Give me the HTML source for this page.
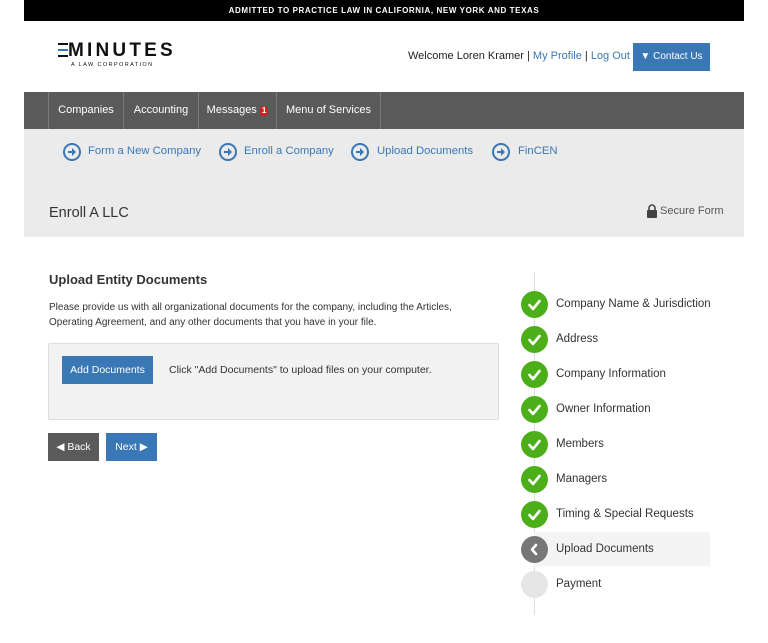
<!DOCTYPE html>
<html><head><style>
*{margin:0;padding:0;box-sizing:border-box}
body{width:768px;height:643px;background:#fff;font-family:"Liberation Sans",sans-serif;position:relative;overflow:hidden;color:#222}
.a{position:absolute;white-space:nowrap}
.top{left:24px;top:0;width:720px;height:21px;background:#000;color:#fff;font-size:8px;font-weight:bold;letter-spacing:.6px;text-align:center;line-height:22px}
.nav{left:24px;top:92px;width:720px;height:37px;background:#5a5a5a}
.nav div{position:absolute;top:0;height:37px;line-height:37px;color:#fff;font-size:11px;border-left:1px solid #7a7a7a;text-align:center}
.sub{left:24px;top:129px;width:720px;height:108px;background:#ebebeb}
.lk{color:#3a78b5;font-size:11.3px}
.ci{position:absolute;width:18px;height:18px;border:2px solid #3a78b5;border-radius:50%}
.step{position:absolute;left:521px;width:27px;height:27px;border-radius:50%;background:#4caf1a}
.st{position:absolute;left:556px;font-size:11.5px;color:#333}
</style></head><body>
<div class="a top">ADMITTED TO PRACTICE LAW IN CALIFORNIA, NEW YORK AND TEXAS</div>
<div class="a" style="left:58px;top:40px;font-size:19px;font-weight:bold;letter-spacing:3.2px;color:#111">
<span style="display:inline-block;width:10px;height:14px;vertical-align:-1px;background:linear-gradient(#111 0 2px,transparent 2px 6px,#3a78b5 6px 8px,transparent 8px 12px,#111 12px 14px)"></span>MINUTES</div>
<div class="a" style="left:71px;top:62px;font-size:5.5px;letter-spacing:1.4px;color:#111">A LAW CORPORATION</div>
<div class="a" style="left:408px;top:50px;font-size:11px">Welcome Loren Kramer | <span style="color:#3a78b5">My Profile</span> | <span style="color:#3a78b5">Log Out</span></div>
<div class="a" style="left:633px;top:43px;width:77px;height:28px;background:#3a78b5;color:#fff;font-size:10px;line-height:28px;text-align:center">▼ Contact Us</div>
<div class="a nav">
<div style="left:24px;width:75px">Companies</div>
<div style="left:99px;width:75px">Accounting</div>
<div style="left:174px;width:78px">Messages <span style="display:inline-block;background:#d21f1f;border-radius:3px;font-size:8px;font-weight:bold;line-height:10px;padding:0 2px">1</span></div>
<div style="left:252px;width:104px">Menu of Services</div>
<div style="left:356px;width:1px"></div>
</div>
<div class="a sub"></div>
<div class="ci" style="left:63px;top:143px"></div><div class="a lk" style="left:88px;top:145px">Form a New Company</div>
<div class="ci" style="left:219px;top:143px"></div><div class="a lk" style="left:244px;top:145px">Enroll a Company</div>
<div class="ci" style="left:351px;top:143px"></div><div class="a lk" style="left:377px;top:145px">Upload Documents</div>
<div class="ci" style="left:492px;top:143px"></div><div class="a lk" style="left:518px;top:145px">FinCEN</div>
<svg class="a" style="left:63px;top:143px" width="460" height="18"><g fill="#3a78b5"><path d="M5 8h4V5l4 4-4 4v-3H5z"/><path transform="translate(156)" d="M5 8h4V5l4 4-4 4v-3H5z"/><path transform="translate(288)" d="M5 8h4V5l4 4-4 4v-3H5z"/><path transform="translate(429)" d="M5 8h4V5l4 4-4 4v-3H5z"/></g></svg>
<div class="a" style="left:49px;top:205px;font-size:14.5px;color:#333">Enroll A LLC</div>
<svg class="a" style="left:646px;top:204px" width="12" height="14"><path d="M3 6V4a3 3 0 016 0v2" stroke="#444" stroke-width="1.6" fill="none"/><rect x="1" y="6" width="10" height="8" rx="1" fill="#444"/></svg>
<div class="a" style="left:660px;top:205px;font-size:11px;color:#555">Secure Form</div>
<div class="a" style="left:49px;top:272px;font-size:13px;font-weight:bold;color:#333">Upload Entity Documents</div>
<div class="a" style="left:49px;top:300px;font-size:10px;line-height:15px;color:#333">Please provide us with all organizational documents for the company, including the Articles,<br>Operating Agreement, and any other documents that you have in your file.</div>
<div class="a" style="left:48px;top:343px;width:451px;height:77px;background:#f2f2f2;border:1px solid #ddd;border-radius:2px"></div>
<div class="a" style="left:62px;top:356px;width:91px;height:28px;background:#3a78b5;color:#fff;font-size:10.5px;line-height:28px;text-align:center">Add Documents</div>
<div class="a" style="left:169px;top:364px;font-size:10.5px;color:#333">Click "Add Documents" to upload files on your computer.</div>
<div class="a" style="left:48px;top:433px;width:51px;height:28px;background:#5a5a5a;color:#fff;font-size:10.5px;line-height:28px;text-align:center">◀ Back</div>
<div class="a" style="left:106px;top:433px;width:51px;height:28px;background:#3a78b5;color:#fff;font-size:10.5px;line-height:28px;text-align:center">Next ▶</div>
<div class="a" style="left:534px;top:272px;width:1px;height:343px;background:#ddd"></div>
<div class="a" style="left:534px;top:532px;width:176px;height:34px;background:#f4f4f4"></div>
<div class="step" style="top:291px"></div><div class="st" style="top:298px">Company Name &amp; Jurisdiction</div>
<div class="step" style="top:326px"></div><div class="st" style="top:333px">Address</div>
<div class="step" style="top:361px"></div><div class="st" style="top:368px">Company Information</div>
<div class="step" style="top:396px"></div><div class="st" style="top:403px">Owner Information</div>
<div class="step" style="top:431px"></div><div class="st" style="top:438px">Members</div>
<div class="step" style="top:466px"></div><div class="st" style="top:473px">Managers</div>
<div class="step" style="top:501px"></div><div class="st" style="top:508px">Timing &amp; Special Requests</div>
<div class="step" style="top:536px;background:#777"></div><div class="st" style="top:543px">Upload Documents</div>
<div class="step" style="top:571px;background:#e6e6e6"></div><div class="st" style="top:578px">Payment</div>
<svg class="a" style="left:521px;top:291px" width="27" height="310"><g stroke="#fff" stroke-width="2.6" fill="none" stroke-linecap="round" stroke-linejoin="round">
<path d="M8.5 14l3.5 4 6.5-8"/><path transform="translate(0 35)" d="M8.5 14l3.5 4 6.5-8"/><path transform="translate(0 70)" d="M8.5 14l3.5 4 6.5-8"/><path transform="translate(0 105)" d="M8.5 14l3.5 4 6.5-8"/><path transform="translate(0 140)" d="M8.5 14l3.5 4 6.5-8"/><path transform="translate(0 175)" d="M8.5 14l3.5 4 6.5-8"/><path transform="translate(0 210)" d="M8.5 14l3.5 4 6.5-8"/><path d="M15 254l-4 4.5 4 4.5"/></g></svg>
</body></html>
